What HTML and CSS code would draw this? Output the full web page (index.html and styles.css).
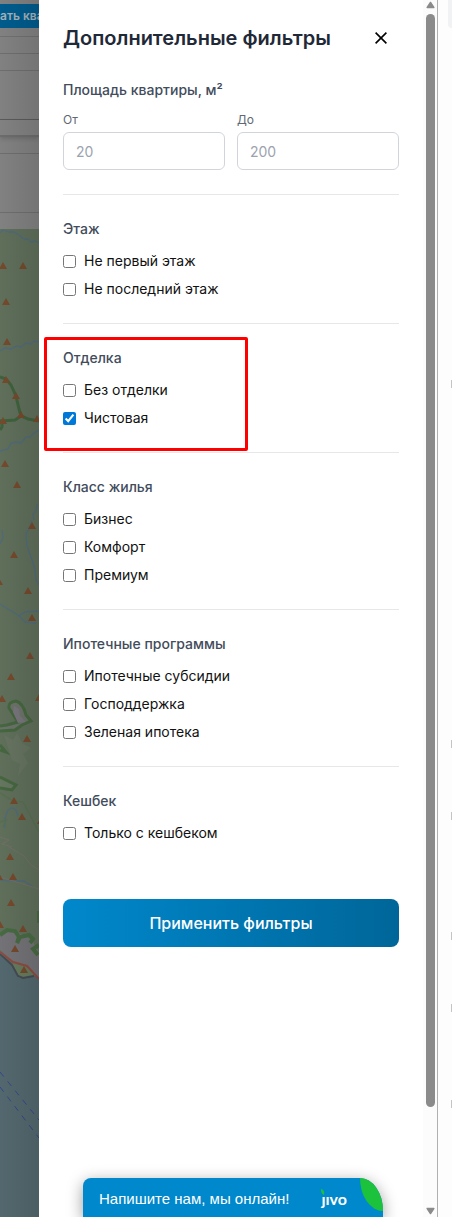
FILE: index.html
```
<!DOCTYPE html>
<html lang="ru">
<head>
<meta charset="utf-8">
<meta name="viewport" content="width=device-width, initial-scale=1">
<title>Дополнительные фильтры</title>
<link rel="stylesheet" href="styles.css">
</head>
<body>
<div class="page">
  <div class="backdrop">
    <div class="backdrop-bar"><span class="backdrop-button">ать ква</span></div>
    <div class="backdrop-row"></div>
    <div class="backdrop-row"></div>
    <div class="backdrop-row backdrop-row-tall"></div>
    <div class="backdrop-row backdrop-row-thick"></div>
    <div class="backdrop-row"></div>
    <div class="backdrop-row backdrop-row-last"></div>
    <div class="backdrop-gap"></div>
    <svg class="map" viewBox="0 229 39 988" preserveAspectRatio="xMinYMin slice" aria-hidden="true">
      <defs><path id="peak" d="M0-4 4 3H-4Z" fill="#75492c"/></defs>
      <rect y="229" width="39" height="988" fill="#5f6f5a"/>
      <g fill="none" stroke="#506a7a" stroke-width="1.3">
        <path d="M0 233 3 230 9 232 14 232 19 235 24 239 28 239 31 242 35 241 39 243"/>
        <path d="M0 351 5 348 11 349 17 346 21 347 26 343 31 344 34 341 39 342"/>
        <path d="M0 451 8 449 11 443 17 442 21 443 26 437 30 437 34 433 39 430"/>
        <path d="M37 504 36 511 33 514 34 520M32 520 30 527 26 534 27 546 31 557 35 569 36 580 39 585"/>
        <path d="M2 530 3 538 0 544M0 604 8 609 13 612 19 616 25 612 39 611M19 616 25 622 36 623"/>
        <path d="M5 828 5 818 8 810 12 808 16 810 18 816M0 880 14 881 24 881 33 887"/>
      </g>
      <path d="M0 377 6 379 11 385 16 396 19 409 21 416 28 419 39 421M21 416 15 420 0 421M2 421 2 427 0 430" fill="none" stroke="#3f613d" stroke-width="3"/>
      <path d="M0 726 7 725 18 722 9 708Q8 702 16 701 23 703 26 715L31 721 22 725 15 730 0 731" fill="#6b7269" stroke="#45663f" stroke-width="3"/>
      <path d="M14 706 19 709 20 716 26 722 18 723 13 712Z" fill="#77757b"/>
      <path d="M0 745 6 752 0 750M0 777 16 785 12 790 0 788" fill="#64765f" stroke="#45663f" stroke-width="3"/>
      <path d="M4 735 13 740 17 733 22 743 31 748 23 754 28 763 18 776 20 764 12 760 8 747Z" fill="#667360"/>
      <path d="M0 793 13 801 23 802 39 832M0 822 6 820 3 827" fill="none" stroke="#576f50" stroke-width="1.5"/>
      <path d="M0 837 9 840 2 844 12 847M9 847 24 856 31 865 39 870M0 877 39 889" fill="none" stroke="#726e66" stroke-width="1"/>
      <path d="M0 934 12 931 24 935 31 936 34 944 39 952V980L26 969 17 965 0 950Z" fill="#737276"/>
      <path d="M0 935 7 930 15 931 19 937 17 943 20 937 29 935 33 939 30 943M39 945 33 949 38 955M39 911V923" fill="none" stroke="#476a42" stroke-width="4"/>
      <path d="M0 952 11 963 19 978 35 976 39 978V1217H0Z" fill="#53686e"/>
      <path d="M12 962 27 967 35 975 19 978Z" fill="#657b5d"/>
      <path d="M0 954 12 965 18 976 23 978 34 976" fill="none" stroke="#454b53" stroke-width="2"/>
      <path d="M0 952 13 962 27 966 39 979" fill="none" stroke="#8d4b41" stroke-width="2"/>
      <path d="M0 1072 39 1120M0 1087 39 1138" fill="none" stroke="#33478c" stroke-dasharray="6 6"/>
      <use href="#peak" x="3" y="266"/><use href="#peak" x="23" y="266"/><use href="#peak" x="6" y="302"/>
      <use href="#peak" x="7" y="342"/><use href="#peak" x="6" y="380"/><use href="#peak" x="16" y="396"/>
      <use href="#peak" x="21" y="415"/><use href="#peak" x="3" y="421"/><use href="#peak" x="37" y="419"/>
      <use href="#peak" x="5" y="464"/><use href="#peak" x="17" y="485"/><use href="#peak" x="32" y="526"/>
      <use href="#peak" x="14" y="555"/><use href="#peak" x="-1" y="582"/><use href="#peak" x="28" y="591"/>
      <use href="#peak" x="32" y="618"/><use href="#peak" x="30" y="656"/><use href="#peak" x="11" y="677"/>
      <use href="#peak" x="2" y="699"/><use href="#peak" x="39" y="698"/><use href="#peak" x="27" y="739"/>
      <use href="#peak" x="14" y="801"/><use href="#peak" x="22" y="817"/><use href="#peak" x="41" y="821"/>
      <use href="#peak" x="10" y="857"/><use href="#peak" x="-1" y="877"/><use href="#peak" x="13" y="877"/>
      <use href="#peak" x="11" y="903"/><use href="#peak" x="0" y="925"/><use href="#peak" x="23" y="929"/>
      <use href="#peak" x="15" y="949"/><use href="#peak" x="24" y="970"/>
    </svg>
  </div>

  <main class="panel">
    <header class="panel-header">
      <h1 class="title">Дополнительные фильтры</h1>
      <button class="close" type="button" aria-label="Закрыть">
        <svg width="12" height="12" viewBox="0 0 12 12" fill="none" stroke="#000" stroke-width="1.6"><path d="M.6.6 11.4 11.4M11.4.6.6 11.4"/></svg>
      </button>
    </header>
    <form class="filters">
      <fieldset class="section">
        <legend class="section-title">Площадь квартиры, м²</legend>
        <div class="range">
          <div class="field"><label class="field-label" for="from">От</label><input class="field-input" id="from" type="text" inputmode="numeric" placeholder="20"></div>
          <div class="field"><label class="field-label" for="to">До</label><input class="field-input" id="to" type="text" inputmode="numeric" placeholder="200"></div>
        </div>
      </fieldset>
      <fieldset class="section">
        <legend class="section-title">Этаж</legend>
        <div class="options">
          <label class="option"><input class="check" type="checkbox">Не первый этаж</label>
          <label class="option"><input class="check" type="checkbox">Не последний этаж</label>
        </div>
      </fieldset>
      <fieldset class="section">
        <legend class="section-title">Отделка</legend>
        <div class="options">
          <label class="option"><input class="check" type="checkbox">Без отделки</label>
          <label class="option"><input class="check" type="checkbox" checked>Чистовая</label>
          <div class="marker"></div>
        </div>
      </fieldset>
      <fieldset class="section">
        <legend class="section-title">Класс жилья</legend>
        <div class="options">
          <label class="option"><input class="check" type="checkbox">Бизнес</label>
          <label class="option"><input class="check" type="checkbox">Комфорт</label>
          <label class="option"><input class="check" type="checkbox">Премиум</label>
        </div>
      </fieldset>
      <fieldset class="section">
        <legend class="section-title">Ипотечные программы</legend>
        <div class="options">
          <label class="option"><input class="check" type="checkbox">Ипотечные субсидии</label>
          <label class="option"><input class="check" type="checkbox">Господдержка</label>
          <label class="option"><input class="check" type="checkbox">Зеленая ипотека</label>
        </div>
      </fieldset>
      <fieldset class="section">
        <legend class="section-title">Кешбек</legend>
        <div class="options">
          <label class="option"><input class="check" type="checkbox">Только с кешбеком</label>
        </div>
      </fieldset>
      <button class="apply" type="button">Применить фильтры</button>
    </form>
    <button class="chat" type="button">
      <span class="chat-text">Напишите нам, мы онлайн!</span>
      <span class="chat-logo">ȷıvo<svg class="chat-tick" width="4" height="6" viewBox="0 0 4 6"><path d="M0 0Q4 1 3 6 0 5 0 0Z" fill="#1cc23c"/></svg></span>
      <span class="chat-leaf"></span>
    </button>
  </main>

  <div class="scrollbar" aria-hidden="true">
    <svg width="9" height="8" viewBox="0 0 9 8"><path d="M4.500 1.500 7.800 6.500H1.200Z" fill="#8b8b8b" stroke="#8b8b8b" stroke-width="1.500" stroke-linejoin="round"/></svg>
    <div class="track"><div class="thumb"></div></div>
    <svg width="9" height="8" viewBox="0 0 9 8"><path d="M1.200 1.500H7.800L4.500 6.500Z" fill="#8b8b8b" stroke="#8b8b8b" stroke-width="1.500" stroke-linejoin="round"/></svg>
  </div>
  <div class="outside">
    <svg width="4" height="1217" viewBox="0 0 4 1217" aria-hidden="true">
      <rect y="-8" width="12" height="36" rx="4" fill="#f1f2f4"/>
      <path d="M3.500 380v8m0 352v8m0 64v8m0 112v8m0 64v8m0 88v8" stroke="#c4c4c4"/>
    </svg>
  </div>
</div>
</body>
</html>
```
FILE: styles.css
```
* { box-sizing: border-box; }

body {
  margin: 0;
  background: #fff;
  color: #111;
  font-family: Inter, "Noto Sans", sans-serif;
  font-size: 14px;
  line-height: 20px;
}

button, input { font: inherit; }

.page {
  display: flex;
  height: 100vh;
  min-height: 1000px;
  overflow: hidden;
}

/* Dimmed page behind the panel */
.backdrop {
  position: relative;
  display: flex;
  flex-direction: column;
  flex: 0 0 39px;
  overflow: hidden;
  background: #818181;
}

.backdrop::after {
  content: "";
  position: absolute;
  inset: 0;
  background: linear-gradient(90deg, rgba(0, 0, 0, 0), rgba(0, 0, 0, 0.1));
}

.backdrop-bar {
  height: 37px;
  flex: none;
  padding-top: 4px;
  border-bottom: 1px solid #707070;
}

.backdrop-button {
  display: block;
  height: 24px;
  background: #005c8d;
  color: #a3b0b8;
  font-size: 12px;
  font-weight: 600;
  line-height: 24px;
  white-space: nowrap;
}

.backdrop-row {
  height: 17px;
  flex: none;
  border-bottom: 1px solid #6e6e6e;
}

.backdrop-row-tall { height: 49px; border-color: #5c5c5c; }
.backdrop-row-thick { border-bottom: 2px solid #6c6c6c; box-shadow: 0 2px 4px rgba(0, 0, 0, 0.15); }
.backdrop-row-last { height: 59px; }
.backdrop-gap { height: 16px; flex: none; }
.map { display: block; width: 100%; flex: 1; min-height: 0; }

.panel {
  position: relative;
  flex: 1;
  min-width: 0;
  padding: 20px 24px;
  overflow: hidden;
  background: #fff;
}

.panel-header {
  display: flex;
  align-items: center;
  justify-content: space-between;
  margin-bottom: 24px;
}

.title {
  margin: 0;
  color: #1f2937;
  font-size: 20px;
  font-weight: 600;
  line-height: 28px;
}

.close {
  display: flex;
  align-items: center;
  justify-content: center;
  width: 36px;
  height: 36px;
  padding: 0;
  border: 0;
  background: none;
}

.section {
  min-width: 0;
  margin: 0 0 24px;
  padding: 0 0 24px;
  border: 0;
  border-bottom: 1px solid #e5e7eb;
}

.section:last-of-type { margin-bottom: 32px; border-bottom: 0; }

.section-title {
  display: block;
  margin-bottom: 12px;
  padding: 0;
  color: #424c5b;
  font-weight: 500;
}

.range {
  display: grid;
  grid-template-columns: 1fr 1fr;
  gap: 12px;
}

.field {
  display: flex;
  flex-direction: column;
  gap: 4px;
  min-width: 0;
}

.field-label {
  color: #5f6874;
  font-size: 12px;
  line-height: 16px;
}

.field-input {
  width: 100%;
  height: 38px;
  padding: 8px 12px;
  border: 1px solid #d1d5db;
  border-radius: 6px;
  background: #fff;
}

.field-input::placeholder { color: #9ca3af; opacity: 1; }

.options {
  position: relative;
  display: flex;
  flex-direction: column;
  gap: 8px;
}

.option {
  display: flex;
  align-items: center;
  gap: 8px;
}

.check {
  width: 13px;
  height: 13px;
  margin: 0;
  accent-color: #0078d7;
}

/* Highlight laid over a section, from above its title to below its options */
.marker {
  position: absolute;
  top: -43px;
  left: -19px;
  width: 204px;
  height: 114px;
  border: 3px solid #f00;
  border-radius: 2px;
  pointer-events: none;
}

.apply {
  display: block;
  width: 100%;
  height: 48px;
  padding: 0;
  border: 0;
  border-radius: 8px;
  background: linear-gradient(90deg, #0088cc, #006699);
  color: #fff;
  font-size: 16px;
  font-weight: 500;
}

.chat {
  position: absolute;
  right: 40px;
  bottom: 0;
  display: flex;
  align-items: center;
  width: 300px;
  height: 39px;
  padding: 2px 36px 0 16px;
  border: 0;
  border-radius: 8px 23px 0 0 / 8px 33px 0 0;
  background: #0088cc;
  box-shadow: 0 4px 16px rgba(0, 0, 0, 0.4);
  color: #fff;
  font-family: "Liberation Sans", Arial, sans-serif;
  font-size: 15px;
  white-space: nowrap;
}

.chat-text { flex: 1; text-align: left; }

.chat-logo {
  position: relative;
  font-family: Lato, sans-serif;
  font-size: 16px;
  font-weight: 700;
}

.chat-tick { position: absolute; top: 0; left: 0; }

.chat-leaf {
  position: absolute;
  top: 0;
  right: 0;
  width: 23px;
  height: 33px;
  border-radius: 0 100% 0 100%;
  background: #1cc23c;
}

.scrollbar {
  display: flex;
  flex-direction: column;
  align-items: center;
  flex: 0 0 15px;
  padding: 1px 0 2px;
  border-right: 1px solid #b0b0b0;
  background: #fcfcfc;
}

.track {
  flex: 1;
  width: 9px;
  padding: 5px 0;
}

.thumb {
  height: 92%;
  border-radius: 5px;
  background: #8b8b8b;
}

.outside {
  display: flex;
  justify-content: flex-end;
  flex: 0 0 14px;
  overflow: hidden;
  background: #fdfdfd;
}
```
